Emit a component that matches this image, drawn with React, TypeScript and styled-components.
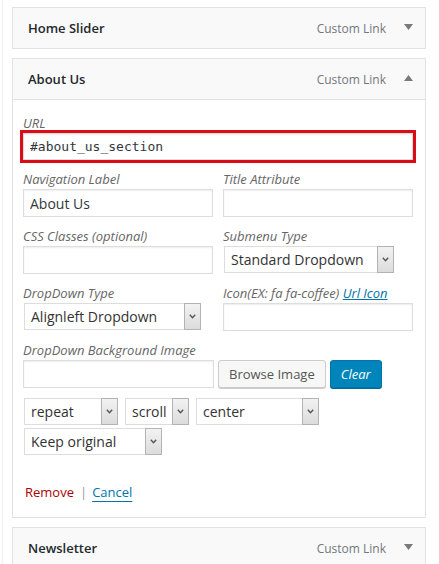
import React from "react";
import styled, { createGlobalStyle } from "styled-components";

const Global = createGlobalStyle`
  html, body { margin: 0; padding: 0; background: #fff; }
  body { font-family: "Open Sans", "Liberation Sans", sans-serif; }
  * { box-sizing: border-box; }
`;

const Page = styled.div`
  margin-left: 2px;
  border-left: 1px solid #efefef;
  padding: 7px 0 0 9px;
  width: 424px;
  height: 564px;
  overflow: hidden;
`;

const Panel = styled.div`
  border: 1px solid #e2e2e2;
  margin-bottom: 9px;
  background: #fff;
`;

const Header = styled.div`
  height: 40px;
  background: #f9f9f9;
  display: flex;
  align-items: center;
  padding: 0 12px 0 15px;
`;

const Title = styled.div`
  flex: 1;
  font-size: 13px;
  font-weight: 600;
  color: #23282d;
`;

const ItemType = styled.span`
  font-size: 12px;
  color: #72777c;
`;

const Toggle = styled.svg`
  margin-left: 18px;
  margin-top: -2px;
  display: block;
`;

const Body = styled.div`
  border-top: 1px solid #e2e2e2;
  padding: 16px 12px 16px 10px;
`;

const Label = styled.div`
  font-size: 13px;
  font-style: italic;
  line-height: 14px;
  color: #666;
  white-space: nowrap;
`;

const LabelLink = styled.a`
  color: #0073aa;
  text-decoration: underline;
`;

const RedFrame = styled.div`
  border: 3px solid #dc0c17;
  margin: 0 -3px;
`;

const TextInput = styled.input<{ $w?: number; $mono?: boolean }>`
  display: block;
  width: ${(p) => (p.$w ? `${p.$w}px` : "100%")};
  height: ${(p) => (p.$mono ? 27 : 28)}px;
  border: 1px solid #ddd;
  box-shadow: inset 0 1px 2px rgba(0, 0, 0, 0.07);
  background: #fff;
  padding: 0 6px;
  margin: 0;
  font-family: ${(p) =>
    p.$mono ? `"DejaVu Sans Mono", "Liberation Mono", monospace` : `"Open Sans", "Liberation Sans", sans-serif`};
  font-size: ${(p) => (p.$mono ? 13 : 14)}px;
  color: #32373c;
  outline: none;
`;

const FieldGrid = styled.div`
  display: grid;
  grid-template-columns: 190px 190px;
  column-gap: 10px;
  row-gap: 12px;
  margin-top: 9px;
`;

const Field = styled.div<{ $mt?: number }>`
  display: flex;
  flex-direction: column;
  gap: 3px;
  margin-top: ${(p) => p.$mt ?? 0}px;
`;

const SelectBox = styled.div<{ $w: number }>`
  display: flex;
  width: ${(p) => p.$w}px;
  height: 27px;
  margin-left: 1px;
  flex: none;
`;

const SelectText = styled.div`
  flex: 1;
  border: 1px solid #ddd;
  border-right: none;
  background: #fff;
  padding-left: 6px;
  font-size: 14px;
  line-height: 25px;
  color: #333;
  white-space: nowrap;
  overflow: hidden;
`;

const ArrowBox = styled.div`
  width: 17px;
  border: 1px solid #b3b3b3;
  background: linear-gradient(#f2f2f2, #dcdcdc);
  display: flex;
  align-items: center;
  justify-content: center;
`;

const Row = styled.div<{ $gap: number; $mt: number }>`
  display: flex;
  align-items: center;
  gap: ${(p) => p.$gap}px;
  margin-top: ${(p) => p.$mt}px;
`;

const Button = styled.button<{ $primary?: boolean }>`
  height: 28px;
  padding: 0 10px;
  border-radius: 3px;
  font-family: "Open Sans", "Liberation Sans", sans-serif;
  font-size: 13px;
  line-height: 26px;
  cursor: pointer;
  border: 1px solid ${(p) => (p.$primary ? "#0073aa" : "#cccccc")};
  background: ${(p) => (p.$primary ? "#0085ba" : "#f7f7f7")};
  color: ${(p) => (p.$primary ? "#fff" : "#555")};
  font-style: ${(p) => (p.$primary ? "italic" : "normal")};
  box-shadow: 0 1px 0 ${(p) => (p.$primary ? "#006799" : "#cccccc")};
`;

const Actions = styled.div`
  margin-top: 28px;
  padding-left: 2px;
  font-size: 13px;
  line-height: 18px;
`;

const RemoveLink = styled.a`
  color: #a00;
  text-decoration: none;
`;

const Sep = styled.span`
  color: #999;
  margin: 0 5px 0 6px;
`;

const CancelLink = styled.a`
  color: #0073aa;
  text-decoration: underline;
  text-underline-offset: 4px;
`;

const Select = ({ w, value }: { w: number; value: string }) => (
  <SelectBox $w={w}>
    <SelectText>{value}</SelectText>
    <ArrowBox>
      <svg width="7" height="5" viewBox="0 0 7 5">
        <path d="M0.8 0.8 L3.5 3.8 L6.2 0.8" fill="none" stroke="#555" strokeWidth="1.4" />
      </svg>
    </ArrowBox>
  </SelectBox>
);

const Arrow = ({ up }: { up?: boolean }) => (
  <Toggle width="9" height="6" viewBox="0 0 9 6">
    <path d={up ? "M0 6 L4.5 0 L9 6 Z" : "M0 0 L9 0 L4.5 6 Z"} fill="#7a7a7a" />
  </Toggle>
);

const PanelHeader = ({ title, up }: { title: string; up?: boolean }) => (
  <Header>
    <Title>{title}</Title>
    <ItemType>Custom Link</ItemType>
    <Arrow up={up} />
  </Header>
);

export default function App() {
  return (
    <>
      <Global />
      <Page>
        <Panel>
          <PanelHeader title="Home Slider" />
        </Panel>
        <Panel>
          <PanelHeader title="About Us" up />
          <Body>
            <Label>URL</Label>
            <RedFrame>
              <TextInput $mono defaultValue="#about_us_section" />
            </RedFrame>
            <FieldGrid>
              <Field>
                <Label>Navigation Label</Label>
                <TextInput defaultValue="About Us" />
              </Field>
              <Field>
                <Label>Title Attribute</Label>
                <TextInput defaultValue="" />
              </Field>
              <Field>
                <Label>CSS Classes (optional)</Label>
                <TextInput defaultValue="" />
              </Field>
              <Field>
                <Label>Submenu Type</Label>
                <Select w={170} value="Standard Dropdown" />
              </Field>
              <Field>
                <Label>DropDown Type</Label>
                <Select w={177} value="Alignleft Dropdown" />
              </Field>
              <Field>
                <Label>
                  Icon(EX: fa fa-coffee) <LabelLink>Url Icon</LabelLink>
                </Label>
                <TextInput defaultValue="" />
              </Field>
            </FieldGrid>
            <Field $mt={12}>
              <Label>DropDown Background Image</Label>
              <Row $gap={4} $mt={0}>
                <TextInput $w={191} defaultValue="" />
                <Button>Browse Image</Button>
                <Button $primary>Clear</Button>
              </Row>
            </Field>
            <Row $gap={6} $mt={10}>
              <Select w={94} value="repeat" />
              <Select w={64} value="scroll" />
              <Select w={123} value="center" />
            </Row>
            <Row $gap={0} $mt={3}>
              <Select w={138} value="Keep original" />
            </Row>
            <Actions>
              <RemoveLink>Remove</RemoveLink>
              <Sep>|</Sep>
              <CancelLink>Cancel</CancelLink>
            </Actions>
          </Body>
        </Panel>
        <Panel>
          <PanelHeader title="Newsletter" />
        </Panel>
      </Page>
    </>
  );
}
